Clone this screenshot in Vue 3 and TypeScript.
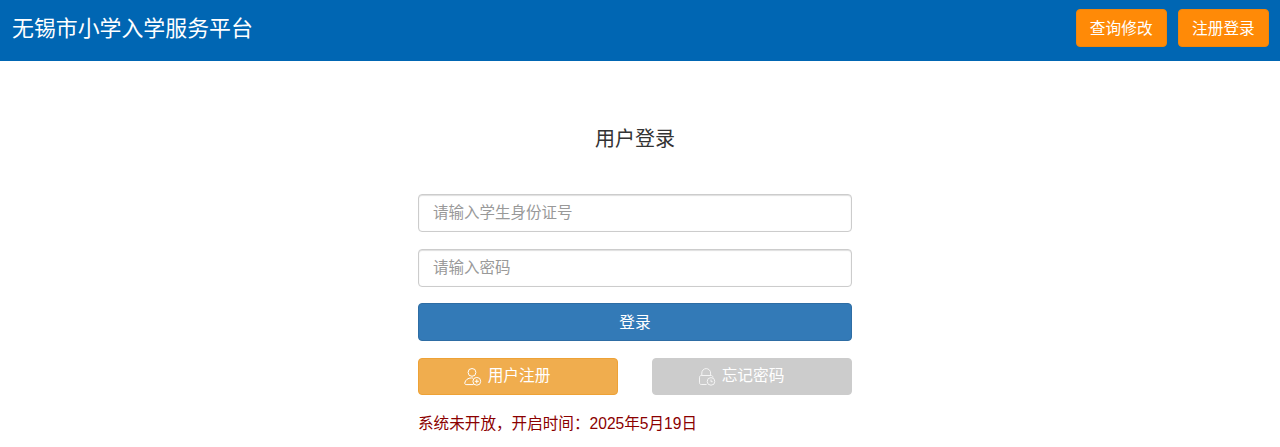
<script setup lang="ts">
import { ref } from 'vue'

const idCard = ref('')
const password = ref('')
const notice = '系统未开放，开启时间：2025年5月19日'
</script>

<template>
  <div class="page">
    <header class="topbar">
      <h1 class="brand">无锡市小学入学服务平台</h1>
      <nav class="top-actions">
        <button class="top-btn" type="button">查询修改</button>
        <button class="top-btn" type="button">注册登录</button>
      </nav>
    </header>

    <main class="login">
      <h2 class="login-title">用户登录</h2>
      <form class="login-form" @submit.prevent>
        <input v-model="idCard" class="field" type="text" placeholder="请输入学生身份证号" />
        <input v-model="password" class="field" type="password" placeholder="请输入密码" />
        <button class="btn btn-primary" type="submit">登录</button>
        <div class="sub-actions">
          <button class="btn btn-register" type="button">
            <svg class="btn-icon" viewBox="0 0 18 18" fill="none" stroke="currentColor" stroke-width="1">
              <circle cx="8" cy="4.4" r="3.9" />
              <path d="M9 10.1C8.5 10 8 9.9 7.5 9.9 4 9.9 1.2 12 .8 15c-.1.9.4 1.6 1.3 1.6h7.4" />
              <circle cx="12.8" cy="13.3" r="3.9" />
              <path d="M10.8 13.3h4M12.8 11.3v4" />
            </svg>
            用户注册
          </button>
          <button class="btn btn-forgot" type="button">
            <svg class="btn-icon faint" viewBox="0 0 18 18" fill="none" stroke="currentColor" stroke-width="1">
              <path d="M3.8 7.5V5a4.4 4.4 0 0 1 8.8 0v2.5" />
              <path d="M8.6 16.5H3.2c-1 0-1.7-.7-1.7-1.7V9.2c0-1 .7-1.7 1.7-1.7h10c1 0 1.7.7 1.7 1.7v.4" />
              <circle cx="13" cy="13.4" r="3.8" />
              <path d="M13 11.5v2.2h1.7" />
            </svg>
            忘记密码
          </button>
        </div>
        <p class="notice">{{ notice }}</p>
      </form>
    </main>
  </div>
</template>

<style>
html,
body {
  margin: 0;
  background: #fff;
}
</style>

<style scoped>
.page {
  font-family: "Liberation Sans", "Noto Sans CJK SC", sans-serif;
  color: #333;
}

.topbar {
  display: flex;
  align-items: center;
  justify-content: space-between;
  box-sizing: border-box;
  height: 61px;
  padding: 0 11px 5px 12px;
  background: #0066b3;
}

.brand {
  margin: 0 0 4px;
  font-size: 21.9px;
  font-weight: 400;
  color: #fff;
}

.top-actions {
  display: flex;
  gap: 11px;
}

.top-btn {
  box-sizing: border-box;
  width: 91.2px;
  height: 38px;
  padding: 0 0 2px;
  border: 1px solid #f0850a;
  border-radius: 4px;
  background: #ff8a07;
  color: #fff;
  font: inherit;
  font-size: 15.7px;
}

.login {
  width: 434px;
  margin-left: 418px;
}

.login-title {
  margin: 0;
  padding-top: 64px;
  height: 69px;
  line-height: 29px;
  font-size: 20px;
  font-weight: 400;
  text-align: center;
}

.login-form {
  display: flex;
  flex-direction: column;
}

.field {
  box-sizing: border-box;
  width: 100%;
  height: 38px;
  margin-bottom: 17px;
  padding: 0 14px;
  border: 1px solid #ccc;
  border-radius: 4px;
  box-shadow: inset 0 1px 1px rgba(0, 0, 0, 0.12), inset 0 0 1px rgba(0, 0, 0, 0.08);
  font: inherit;
  font-size: 15.5px;
  color: #555;
  outline: none;
}

.field::placeholder {
  color: #999;
  opacity: 1;
}

.field + .btn {
  margin-top: -1px;
}

.btn {
  display: flex;
  align-items: center;
  justify-content: center;
  box-sizing: border-box;
  height: 38px;
  padding: 0 0 2px;
  border: 1px solid transparent;
  border-radius: 4px;
  color: #fff;
  font: inherit;
  font-size: 15.7px;
}

.btn-primary {
  width: 100%;
  background: #337ab7;
  border-color: #2e6da4;
  margin-bottom: 17px;
}

.sub-actions {
  display: flex;
  justify-content: space-between;
}

.sub-actions .btn {
  width: 200px;
  height: 37px;
  gap: 6px;
  padding: 0 22px 4px 0;
}

.btn-register {
  background: #f0ad4e;
  border-color: #eea236;
}

.btn-forgot {
  background: #ccc;
  border-color: #ccc;
}

.btn-icon {
  width: 18px;
  height: 18px;
  margin-top: 4px;
}

.btn-icon.faint {
  opacity: 0.8;
}

.notice {
  margin: 19px 0 0;
  font-size: 15.6px;
  line-height: 20px;
  color: #8b0000;
}
</style>
